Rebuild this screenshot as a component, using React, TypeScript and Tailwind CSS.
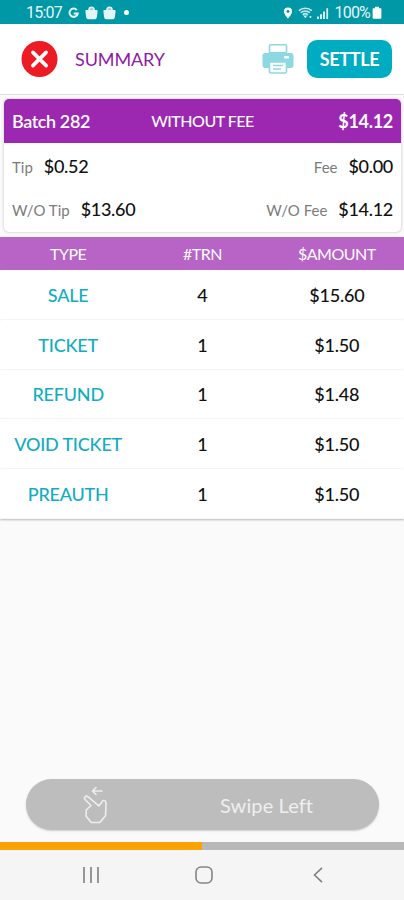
const rows = [
  { type: "SALE", count: 4, amount: "$15.60" },
  { type: "TICKET", count: 1, amount: "$1.50" },
  { type: "REFUND", count: 1, amount: "$1.48" },
  { type: "VOID TICKET", count: 1, amount: "$1.50" },
  { type: "PREAUTH", count: 1, amount: "$1.50" },
];

function BagIcon() {
  return (
    <svg viewBox="0 0 13 14" className="h-[14px] w-[13px]">
      <path d="M4 5V3.8a2.5 2.5 0 0 1 5 0V5" fill="#8fd0d8" stroke="#e4f5f7" strokeWidth="1.5" />
      <path d="M1.6 4h9.8c.8 0 1.3.5 1.2 1.3l-.7 5.6c-.2 1.5-1.2 2.4-2.7 2.4H3.8c-1.5 0-2.5-.9-2.7-2.4L.4 5.3C.3 4.5.8 4 1.6 4z" fill="#e4f5f7" />
    </svg>
  );
}

function StatusBar() {
  return (
    <div className="flex h-6 shrink-0 items-center bg-[#0097a7] pl-[26px] pr-[22px] pt-px font-['Roboto',sans-serif] text-[#e4f5f7]">
      <span className="w-[42px] whitespace-nowrap text-[16px] tracking-[-0.8px]">15:07</span>
      <svg viewBox="0 0 12 12" className="mt-px h-3 w-[11px]">
        <path d="M9.6 2.8A4.5 4.5 0 1 0 10.6 6.5H6.2" fill="none" stroke="#e4f5f7" strokeWidth="2.2" />
      </svg>
      <div className="ml-[6px] flex gap-[5px]">
        <BagIcon />
        <BagIcon />
      </div>
      <span className="ml-[8px] h-[5px] w-[5px] rounded-full bg-white" />
      <div className="ml-auto flex items-center">
        <svg viewBox="0 0 10 13" className="mr-[5px] h-3 w-[10px]">
          <path fillRule="evenodd" d="M5 .5a4.4 4.4 0 0 1 4.4 4.4C9.4 8 5 12.6 5 12.6S.6 8 .6 4.9A4.4 4.4 0 0 1 5 .5zm0 2.8a1.6 1.6 0 1 0 0 3.2 1.6 1.6 0 0 0 0-3.2z" fill="#fff" />
        </svg>
        <svg viewBox="0 0 16 12" className="mr-[3px] h-3 w-4">
          <path d="M.8 3.6c3.6-3.2 9.4-3.2 13 0M2.7 5.7c2.6-2.3 6.6-2.3 9.2 0M4.7 7.8c1.5-1.3 3.7-1.3 5.2 0" fill="none" stroke="#c5e8ec" strokeWidth="1.6" />
          <path d="M5.2 8.6 7.3 11.2 9.4 8.6zM11.5 9h1.8v2h-1.8z" fill="#d5eff2" />
        </svg>
        <svg viewBox="0 0 12 12" className="mr-[6px] h-3 w-3" fill="#d5eff2">
          <path d="M0 9.5h2V12H0zM3 7.3h2V12H3zM6 4.5h2V12H6zM9.3 1.2h1.8V12H9.3z" />
        </svg>
        <span className="whitespace-nowrap text-[16px] tracking-[-0.8px]">100%</span>
        <svg viewBox="0 0 10 13" className="ml-[2px] h-[13px] w-[10px]">
          <path d="M3 .8h4v1.5h1.4c.6 0 1 .4 1 1V12c0 .5-.4.8-1 .8H1.6c-.6 0-1-.3-1-.8V3.3c0-.6.4-1 1-1H3z" fill="#fff" />
        </svg>
      </div>
    </div>
  );
}

function Header() {
  return (
    <header className="flex h-[71px] shrink-0 items-center border-b border-[#dedede] bg-white pl-[21px] pr-3">
      <svg viewBox="0 0 38 38" className="h-[38px] w-[37px]">
        <circle cx="19" cy="19" r="18.5" fill="#ed1c24" />
        <path d="m12.2 12.2 13.6 13.6m0-13.6L12.2 25.8" stroke="#fff" strokeWidth="3.7" strokeLinecap="round" />
      </svg>
      <h1 className="ml-[17px] text-[18px] tracking-[-0.1px] text-[#8e1aa5]">SUMMARY</h1>
      <svg viewBox="0 0 32 30" className="ml-auto h-[30px] w-8">
        <path d="M7.5 10V2c0-.7.5-1.2 1.2-1.2h14.6c.7 0 1.2.5 1.2 1.2v8" fill="#fff" stroke="#8ed8e1" strokeWidth="1.6" />
        <path d="M3 11h4.5v-2h0H3c-1.5 0-2.5 1-2.5 2.5v10C.5 23 1.5 24 3 24h26c1.500 0 2.500-1 2.500-2.500v-10C31.500 10 30.500 9 29 9h-4.500v-1h-17v3z" fill="#8ed8e1" />
        <rect x="22" y="12" width="5" height="2.5" rx="1" fill="#fff" />
        <path d="M7.5 18h17v9.8c0 .7-.5 1.2-1.2 1.2H8.7c-.7 0-1.2-.5-1.2-1.2z" fill="#fff" stroke="#8ed8e1" strokeWidth="1.6" />
        <path d="M11 21.5h10M11 25h8" stroke="#8ed8e1" strokeWidth="1.5" />
      </svg>
      <button className="ml-[13px] h-[38px] w-[85px] rounded-[10px] bg-[#00acc1] text-[18px] font-bold tracking-[-0.3px] text-white">
        SETTLE
      </button>
    </header>
  );
}

function Figure({ label, value }: { label: string; value: string }) {
  return (
    <div className="flex items-baseline gap-[11px]">
      <span className="text-[15px] text-[#7c7c7c]">{label}</span>
      <span className="text-[18px] font-medium tracking-[-0.3px] text-[#111]">{value}</span>
    </div>
  );
}

function BatchCard() {
  return (
    <section className="mx-1 mt-1 h-[133px] w-[397px] shrink-0 overflow-hidden rounded-[5px] bg-white shadow-[0_0_2px_1px_#dddddd]">
      <div className="grid h-11 grid-cols-[1fr_auto_1fr] items-center bg-[#9c27b0] px-2 text-white">
        <span className="text-[18px] font-semibold tracking-[-0.4px]">Batch 282</span>
        <span className="text-[16px] font-medium tracking-[-0.5px]">WITHOUT FEE</span>
        <span className="text-right text-[18px] font-bold tracking-[-0.3px]">$14.12</span>
      </div>
      <div className="flex h-[46px] items-center justify-between px-2">
        <Figure label="Tip" value="$0.52" />
        <Figure label="Fee" value="$0.00" />
      </div>
      <div className="flex h-[41px] items-center justify-between px-2">
        <Figure label="W/O Tip" value="$13.60" />
        <Figure label="W/O Fee" value="$14.12" />
      </div>
    </section>
  );
}

function BatchTable() {
  return (
    <section className="mt-[5px] shrink-0">
      <div className="grid h-[33px] grid-cols-3 items-center bg-[#b863c6] pl-px text-center text-[16px] tracking-[-0.5px] text-white">
        <span>TYPE</span>
        <span>#TRN</span>
        <span>$AMOUNT</span>
      </div>
      <div className="shadow-[0_1px_2px_#bbbbbb]">
        {rows.map((row) => (
          <div
            key={row.type}
            className="grid h-[49.8px] grid-cols-3 items-center rounded-[3px] border-b border-[#f4f4f4] bg-white pl-px pt-[2px] text-center text-[18px] font-medium tracking-[-0.2px] text-[#111]"
          >
            <span className="text-[#12adc2]">{row.type}</span>
            <span>{row.count}</span>
            <span>{row.amount}</span>
          </div>
        ))}
      </div>
    </section>
  );
}

function SwipeButton() {
  return (
    <div className="ml-[26px] mr-[25px] mb-3 mt-auto flex h-[51px] shrink-0 items-center rounded-full bg-[#bdbdbd] pl-[57px] shadow-[0_1px_2px_#cccccc]">
      <svg viewBox="0 0 24 38" className="h-[38px] w-6" fill="none" stroke="#eee" strokeWidth="1.6" strokeLinecap="round" strokeLinejoin="round">
        <path d="M19 5H9.5M13 1.5 9.500 5l3.500 3.500" />
        <path d="M8 19.500 2.200 13.700c-1.900-2.300.9-4.700 3-2.800l10.600 9 3-3.400V16c.6-2.200 3.800-2 4.200.4l-.4 13.100-5.700 7H8.200l-5.100-6.300.1-6.200z" />
      </svg>
      <span className="ml-[113px] text-[20px] tracking-[0.1px] text-[#efefef]">Swipe Left</span>
    </div>
  );
}

function NavBar() {
  return (
    <nav className="flex h-[50px] shrink-0 items-center bg-[#f5f5f5] pl-[83px] pr-[81px]">
      <svg viewBox="0 0 16 16" className="h-4 w-4">
        <path d="M1 0v16M8 0v16M15 0v16" stroke="#858585" strokeWidth="1.7" />
      </svg>
      <svg viewBox="0 0 18 18" className="ml-24 h-[18px] w-[18px]">
        <rect x="1" y="1" width="16" height="16" rx="5" fill="none" stroke="#858585" strokeWidth="1.6" />
      </svg>
      <svg viewBox="0 0 10 16" className="ml-auto h-4 w-[10px]">
        <path d="M9 .8 1.5 8 9 15.2" fill="none" stroke="#808080" strokeWidth="1.6" />
      </svg>
    </nav>
  );
}

export default function App() {
  return (
    <div className="flex h-[900px] w-[404px] flex-col overflow-hidden bg-[#fafafa] font-['Lato',sans-serif]">
      <StatusBar />
      <Header />
      <BatchCard />
      <BatchTable />
      <SwipeButton />
      <div className="h-2 shrink-0 bg-[#b8b8b8]">
        <div className="h-full w-1/2 bg-[#fca204]" />
      </div>
      <NavBar />
    </div>
  );
}
